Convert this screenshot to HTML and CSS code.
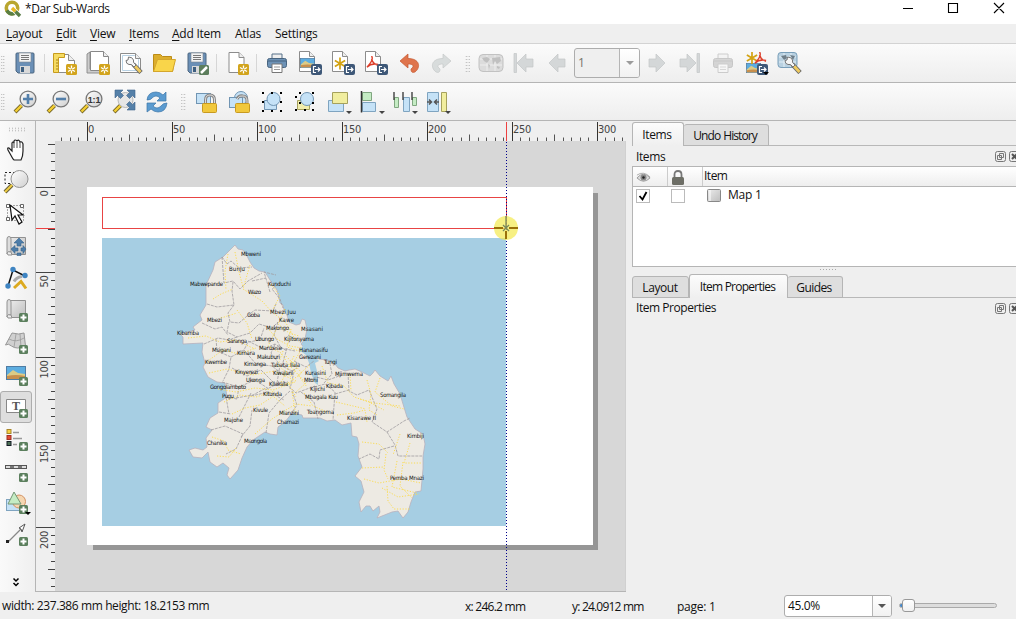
FILE: index.html
```html
<!DOCTYPE html>
<html lang="en">
<head>
<meta charset="utf-8">
<title>*Dar Sub-Wards</title>
<link rel="stylesheet" href="styles.css">
</head>
<body>
<svg class="defs" width="0" height="0">
  <defs>
    <linearGradient id="lens" x1="0" y1="0" x2="1" y2="1"><stop offset="0" stop-color="#fff"/><stop offset="1" stop-color="#cfcfcf"/></linearGradient>
    <linearGradient id="sheet" x1="0" y1="0" x2="1" y2="1"><stop offset="0" stop-color="#ececec"/><stop offset="1" stop-color="#bdbdbd"/></linearGradient>
    <symbol id="plus" viewBox="0 0 9 9"><rect width="9" height="9" rx="1.5" fill="#5b7f5d"/><path d="M4.5 1.5v6M1.5 4.5h6" stroke="#fff" stroke-width="2"/></symbol>
    <symbol id="star" viewBox="0 0 11 11"><rect width="11" height="11" rx="1.5" fill="#d2a41c"/><path d="M5.5 1.5v8M2 3.5l7 4M9 3.5l-7 4" stroke="#fff" stroke-width="1.3"/><circle cx="5.5" cy="5.5" r="1" fill="#d2a41c"/></symbol>
    <symbol id="export" viewBox="0 0 11 11"><rect width="11" height="11" rx="2" fill="#3e5878"/><path d="M5 2.5H2.5v6H5M4 5.500h5M7 3.500l2 2-2 2" fill="none" stroke="#fff" stroke-width="1.200"/></symbol>
    <symbol id="page" viewBox="0 0 16 21"><path d="M.5.5h10l5 5v15H.5z" fill="#fff" stroke="#8c8c8c"/><path d="M10.500.500v5h5" fill="#eee" stroke="#8c8c8c"/></symbol>
    <symbol id="floppy" viewBox="0 0 20 22"><path d="M1 2q0-1 1-1h16q1 0 1 1v18q0 1-1 1H3l-2-2z" fill="#6a8fb6" stroke="#4c6680"/><path d="M4 1h12v9H4z" fill="#f3f3f3" stroke="#7c8790" stroke-width=".6"/><path d="M6 3.500h8M6 5.500h8M6 7.500h8" stroke="#777"/><path d="M5 14h10v7H5z" fill="#d9d9d9"/><path d="M6 15h3v5H6z" fill="#3e5f80"/></symbol>
    <symbol id="mag" viewBox="0 0 24 24"><path d="M8.500 15.500L2 22" stroke="#766727" stroke-width="4"/><path d="M8.500 15.500L2.500 21.500" stroke="#f5cf34" stroke-width="2.400"/><circle cx="15" cy="9" r="7.900" fill="url(#lens)" stroke="#777" stroke-width="1.300"/></symbol>
    <symbol id="wrench" viewBox="0 0 18 18"><path d="M8 8l8 8.500" stroke="#696969" stroke-width="4.600"/><path d="M9.500 9.500l6 6.500" stroke="#efcb5f" stroke-width="2.800"/><path d="M3.500 1l-.5 3-2 .5q0 3.500 3 4l2.500 0 2.500 2.500 2-2-2.500-2.500V4q-1-3-5-3z" fill="#f6f6f6" stroke="#777"/></symbol>
    <symbol id="printer" viewBox="0 0 20 20"><path d="M5 1h10v6H5z" fill="#eee" stroke="#567089"/><rect x=".5" y="5.500" width="19" height="9" rx="2" fill="#6d92b6" stroke="#48647f"/><path d="M1 8h18" stroke="#46637f"/><path d="M5 11h10v8.500H5z" fill="#fff" stroke="#777"/><path d="M7 14h6M7 16.500h6" stroke="#999"/></symbol>
    <symbol id="maproll" viewBox="0 0 21 21"><path d="M3.500 1.500h16v17h-16z" fill="url(#sheet)" stroke="#919191"/><path d="M1 3q0-2.500 2-2.500T5 3v13q-4-1-4 2z" fill="#ddd" stroke="#929292"/><path d="M1 17q1-2 4-1l1 3H2z" fill="#eee" stroke="#919191"/></symbol>
    <symbol id="float" viewBox="0 0 11 11"><rect x=".5" y=".5" width="10" height="10" rx="2" fill="#eee" stroke="#777"/><path d="M4.500 2.500h4v4h-4zM2.500 4.500h4v4h-4z" fill="none" stroke="#777"/></symbol>
    <symbol id="close" viewBox="0 0 11 11"><rect x=".5" y=".5" width="10" height="10" rx="2" fill="#eee" stroke="#777"/><path d="M3 3l5 5M8 3L3 8" stroke="#555" stroke-width="2"/></symbol>
    <symbol id="asterisk" viewBox="0 0 14 14"><path d="M7 0v14M1 3.500l12 7M13 3.500l-12 7" stroke="#d3a313" stroke-width="2"/></symbol>
    <symbol id="acro" viewBox="0 0 14 14"><path d="M6 0c2 3 0 7-5 12M6 3c1 4 3 6 7 7M1 12c3-3 7-4 12-3" fill="none" stroke="#dd3e2a" stroke-width="1.500"/></symbol>
    <symbol id="photo" viewBox="0 0 20 14" preserveAspectRatio="none"><rect x=".5" y=".5" width="19" height="13" fill="#5dade0" stroke="#4f7ca3"/><path d="M1 9l6-5 5 3 7 1v5H1z" fill="#dccb86"/><path d="M1 10q9-2 18 0v3H1z" fill="#c88f4d"/></symbol>
    <pattern id="hticks" x="87" y="121" width="85" height="21" patternUnits="userSpaceOnUse">
      <path d="M.5 1v20" stroke="#333"/><path d="M8.500 16.500v5M17.500 16.500v5M25.500 16.500v5M34.500 16.500v5M42.500 13.500v8M51.500 16.500v5M59.500 16.500v5M68.500 16.500v5M76.500 16.500v5" stroke="#555"/>
    </pattern>
    <pattern id="vticks" x="36" y="187" width="20" height="85" patternUnits="userSpaceOnUse">
      <path d="M0 .5h20" stroke="#444"/><path d="M15 8.500h5M15 17.500h5M15 25.500h5M15 34.500h5M12 42.500h8M15 51.500h5M15 59.500h5M15 68.500h5M15 76.500h5" stroke="#444"/>
    </pattern>
  </defs>
</svg>

<header class="titlebar">
  <svg class="app-logo" viewBox="0 0 17 17"><circle cx="8" cy="8" r="5.700" fill="none" stroke="#b9a62f" stroke-width="3.600"/><path d="M2.700 10.500q4 5.500 9.300 2" fill="none" stroke="#5b7f43" stroke-width="3.600"/><path d="M8 8l7.500 7.500" stroke="#fff" stroke-width="5"/><path d="M8 8l3.500 3.500" stroke="#e9b926" stroke-width="3.400"/><path d="M11.500 11.500l4.500 4.500" stroke="#5a7d47" stroke-width="3.400"/></svg>
  <span class="title">*Dar Sub-Wards</span>
  <svg class="win-controls" viewBox="0 0 113 24"><path d="M0 8.500h10M45.500 3.500h9v9h-9zM91 3l10 10M101 3L91 13" fill="none" stroke="#000" stroke-width="1.100"/></svg>
</header>

<nav class="menubar">
  <span class="m-layout"><u>L</u>ayout</span><span class="m-edit"><u>E</u>dit</span><span class="m-view"><u>V</u>iew</span><span class="m-items"><u>I</u>tems</span><span class="m-add"><u>A</u>dd Item</span><span class="m-atlas">Atlas</span><span>Settings</span>
</nav>

<div class="toolbar">
  <i class="grip first"></i>
  <b class="btn"><svg viewBox="0 0 24 24"><use href="#floppy" x="2" y="1" width="20" height="22"/></svg></b>
  <i class="sep"></i>
  <b class="btn"><svg viewBox="0 0 24 24"><path d="M1.500 3.500h14l6 6v12h-20z" fill="#fff" stroke="#8c8c8c"/><path d="M15.500 3.500v6h6" fill="#eee" stroke="#8c8c8c"/><path d="M.5 2.500h11v4h-6v15h-5z" fill="#f5db62" stroke="#c79b1c"/><path d="M3 9h2M3 12h2M3 15h2M3 18h2" stroke="#a7821f"/><use href="#star" x="13" y="13" width="11" height="11"/></svg></b>
  <b class="btn"><svg viewBox="0 0 24 24"><path d="M1 3l3-2v17l14 2-2 2H1z" fill="#ccc" stroke="#888" stroke-width=".9"/><path d="M4.500.500h13l5 5v14h-18z" fill="#fff" stroke="#888"/><path d="M17.500.500v5h5" fill="#eee" stroke="#888"/><use href="#star" x="13" y="13" width="11" height="11"/></svg></b>
  <b class="btn"><svg viewBox="0 0 24 24"><path d="M1.500 2.500h15l5 5v14h-20z" fill="#fff" stroke="#8c8c8c"/><path d="M3.500 4.500h12l4 4v11h-16z" fill="none" stroke="#b9d2e4"/><path d="M16.500 2.500v5h5" fill="#eee" stroke="#8c8c8c"/><use href="#wrench" x="6" y="5" width="18" height="18"/></svg></b>
  <b class="btn"><svg viewBox="0 0 24 24"><path d="M1.500 20.500v-17h7l2 2h9v3h3l-2 12z" fill="#dcae2d" stroke="#bc8c17"/><path d="M5.500 8.500h18l-3 12h-19z" fill="#f9d54a" stroke="#d4a62c"/></svg></b>
  <b class="btn"><svg viewBox="0 0 24 24"><use href="#floppy" x="2" y="1" width="20" height="22"/><rect x="14" y="14" width="10" height="10" rx="1.500" fill="#5c7d5c"/><path d="M16 22l6-6" stroke="#fff" stroke-width="2.500"/></svg></b>
  <i class="sep"></i>
  <b class="btn"><svg viewBox="0 0 24 24"><use href="#page" x="3" y="1" width="17" height="21"/><use href="#star" x="13" y="13" width="11" height="11"/></svg></b>
  <i class="sep"></i>
  <b class="btn"><svg viewBox="0 0 24 24"><use href="#printer" x="2" y="2" width="20" height="20"/></svg></b>
  <b class="btn"><svg viewBox="0 0 24 24"><use href="#page" x="1" y="0" width="16" height="21"/><use href="#photo" x="2" y="7" width="15" height="10"/><use href="#export" x="13" y="13" width="11" height="11"/></svg></b>
  <b class="btn"><svg viewBox="0 0 24 24"><use href="#page" x="1" y="0" width="16" height="21"/><use href="#asterisk" x="3" y="6" width="12" height="13"/><use href="#export" x="13" y="13" width="11" height="11"/></svg></b>
  <b class="btn"><svg viewBox="0 0 24 24"><use href="#page" x="1" y="0" width="16" height="21"/><use href="#acro" x="2" y="5" width="13" height="13"/><use href="#export" x="13" y="13" width="11" height="11"/></svg></b>
  <b class="btn"><svg viewBox="0 0 24 24"><path d="M3 10l8-7v4.500c12 0 13 9 7 13.500-3 1-4 0-4-3 4-3 2-5-3-5v4z" fill="#df744c" stroke="#c4572f" stroke-width=".7"/></svg></b>
  <b class="btn"><svg viewBox="0 0 24 24"><path d="M21 10l-8-7v4.500C1 7.500 0 16.500 6 21c3 1 4 0 4-3-4-3-2-5 3-5v4z" fill="#d8dcdc" stroke="#c5c9c9" stroke-width=".7"/></svg></b>
  <i class="grip"></i>
  <b class="btn"><svg viewBox="0 0 24 24"><rect x="0" y="3.500" width="24" height="17" rx="4" fill="#dcdcdc" stroke="#c2c2c2"/><path d="M1 8h22M1 14h22M8 4v16M16 4v16" stroke="#eee"/><path d="M3 7l5-1 3 2-3 4-3-2zM9 13l2 1-1 4zM13 7l8-1 1 4-4 3-2-3-2 4zM18 15l3 1-1 2-2-1z" fill="#c0c0c0"/></svg></b>
  <b class="btn"><svg viewBox="0 0 24 24" class="dim"><path d="M2 2.500h2.500v19H2zM5 12l9-9v5h7v8h-7v5z"/></svg></b>
  <b class="btn"><svg viewBox="0 0 24 24" class="dim"><path d="M4 12l9-9v5h7v8h-7v5z"/></svg></b>
  <div class="combo page-combo"><span>1</span><em></em></div>
  <b class="btn"><svg viewBox="0 0 24 24" class="dim"><path d="M20 12l-9-9v5H4v8h7v5z"/></svg></b>
  <b class="btn"><svg viewBox="0 0 24 24" class="dim"><path d="M19 2.500h2.500v19H19zM18 12L9 3v5H2v8h7v5z"/></svg></b>
  <b class="btn"><svg viewBox="0 0 24 24" class="faded"><use href="#printer" x="2" y="2" width="20" height="20"/></svg></b>
  <b class="btn"><svg viewBox="0 0 24 24"><use href="#photo" x="2" y="12" width="15" height="10"/><use href="#asterisk" x="2" y="1" width="12" height="12"/><use href="#acro" x="10" y="1" width="13" height="13"/><use href="#export" x="13" y="13" width="11" height="11"/><path d="M19 21h6l-3 3z"/></svg></b>
  <b class="btn"><svg viewBox="0 0 24 24"><rect x="1" y="1.500" width="19" height="15" rx="3" fill="#b9d1e1" stroke="#789eb9"/><path d="M2 6h17M2 11h17M7 2v14M14 2v14" stroke="#e2eef5"/><path d="M4 5l5-1 1 3-3 2zM13 4l5 1-2 4z" fill="#6e7e89"/><use href="#wrench" x="7" y="5" width="18" height="18"/></svg></b>
</div>

<div class="toolbar">
  <i class="grip first"></i>
  <b class="btn"><svg viewBox="0 0 24 24"><use href="#mag"/><path d="M15 4v10M10 9h10" stroke="#537faa" stroke-width="2.600"/></svg></b>
  <b class="btn"><svg viewBox="0 0 24 24"><use href="#mag"/><path d="M10 9h10" stroke="#537faa" stroke-width="2.600"/></svg></b>
  <b class="btn"><svg viewBox="0 0 24 24"><use href="#mag"/><text x="15" y="12.500" class="ratio">1:1</text></svg></b>
  <b class="btn"><svg viewBox="0 0 24 24"><path d="M8.500 15.500L2 22" stroke="#766727" stroke-width="4"/><path d="M8.500 15.500L2.500 21.500" stroke="#f5cf34" stroke-width="2.400"/><circle cx="13.500" cy="10" r="7.500" fill="#e6e6e6" stroke="#aaa" stroke-width=".8"/><path d="M3 0h8L8.500 2.500l3 3-3 3-3-3L3 8zM23 0h-8l2.500 2.500-3 3 3 3 3-3L23 8zM23 20h-8l2.500-2.500-3-3 3-3 3 3L23 12z" fill="#5580a8" stroke="#3d6289" stroke-width=".6"/></svg></b>
  <b class="btn"><svg viewBox="0 0 24 24"><path d="M2 10q1-8 9-8 4 0 7 3l3-3v9h-9l3-3q-4-4-8 0-1 2-5 2z" fill="#5b9bd0" stroke="#3c75a8" stroke-width=".7"/><path d="M22 13q-1 9-9 9-4 0-7-3l-4 3v-9h9l-3 3q4 4 8 0 2-3 6-3z" fill="#5b9bd0" stroke="#3c75a8" stroke-width=".7"/></svg></b>
  <i class="grip wide"></i>
  <b class="btn"><svg viewBox="0 0 24 24"><rect x="1.500" y="3.500" width="14" height="10" fill="#c5e2f7" stroke="#7195b3"/><path d="M10.500 14v-4q0-5 4.500-5t4.500 5v4" fill="none" stroke="#888" stroke-width="3"/><path d="M10.500 14v-4q0-5 4.500-5t4.500 5v4" fill="none" stroke="#ddd"/><rect x="7.500" y="13.500" width="14" height="9" rx="1" fill="#f1c83c" stroke="#c89a20"/></svg></b>
  <b class="btn"><svg viewBox="0 0 24 24"><circle cx="13" cy="8" r="6.500" fill="#c5e2f7" stroke="#7195b3"/><rect x="1.500" y="7.500" width="13" height="10" fill="#c5e2f7" stroke="#7195b3"/><path d="M9 9q2-4 6-3 4 0 4 5v3" fill="none" stroke="#888" stroke-width="3"/><path d="M9 9q2-4 6-3 4 0 4 5v3" fill="none" stroke="#ddd"/><rect x="7.500" y="13.500" width="14" height="9" rx="1" fill="#f1c83c" stroke="#c89a20"/></svg></b>
  <b class="btn"><svg viewBox="0 0 24 24"><path d="M3.500 10.500h12v9h-12z" fill="#c5e2f7" stroke="#7195b3"/><circle cx="12.500" cy="9" r="6.500" fill="#c5e2f7" stroke="#7195b3"/><path d="M1 2h2v2H1zM10 2h2v2h-2zM19 2h2v2h-2zM1 11h2v2H1zM19 11h2v2h-2zM1 20h2v2H1zM10 20h2v2h-2zM19 20h2v2h-2z"/></svg></b>
  <b class="btn"><svg viewBox="0 0 24 24"><path d="M3.500 10.500h12v9h-12z" fill="#f1edac" stroke="#a5a15c"/><circle cx="13" cy="9" r="6.500" fill="#c5e2f7" stroke="#7195b3"/><path d="M5 2h2v2H5zM18 2h2v2h-2zM1 6h2v2H1zM5 12h2v2H5zM18 12h2v2h-2zM1 19h2v2H1zM10 19h2v2h-2zM18 19h2v2h-2z"/></svg></b>
  <b class="btn"><svg viewBox="0 0 24 24"><path d="M1.500 10.500h15v11h-15z" fill="#c5e2f7" stroke="#7fa4c0"/><path d="M5.500 2.500h15v11h-15z" fill="#f1ee9f" stroke="#a5a15c"/><path class="drop" d="M19 21h6l-3 3z"/></svg></b>
  <b class="btn"><svg viewBox="0 0 24 24"><path d="M2.500 2.500h9v8h-9z" fill="#c5ecc4" stroke="#80a680"/><path d="M2.500 12.500h13v9h-13z" fill="#c5e2f7" stroke="#7fa4c0"/><path d="M1.500 1v21.500" stroke="#333" stroke-width="1.500"/><path class="drop" d="M19 21h6l-3 3z"/></svg></b>
  <b class="btn"><svg viewBox="0 0 24 24"><path d="M1.500 7.500h4v10h-4zM19.500 7.500h4v8h-4z" fill="#c5ecc4" stroke="#80a680"/><path d="M10.500 7.500h6v14h-6z" fill="#c5e2f7" stroke="#7fa4c0"/><path d="M1 2v8M10 2v8M19 2v8" stroke="#333" stroke-width="1.300"/><path class="drop" d="M19 21h6l-3 3z"/></svg></b>
  <b class="btn"><svg viewBox="0 0 24 24"><path d="M1.500 2.500h11v19h-11z" fill="#c5e2f7" stroke="#7fa4c0"/><path d="M15.500 2.500h5v19h-5z" fill="#f1ee9f" stroke="#a5a15c"/><path d="M1 12h4M3 9.500l2.500 2.500L3 14.500M13 12H9M11 9.500L8.500 12l2.500 2.500" fill="none" stroke="#555" stroke-width="1.500"/><path class="drop" d="M19 21h6l-3 3z"/></svg></b>
</div>

<main class="workspace">
  <aside class="toolbox">
    <i class="hgrip"></i>
    <b><svg viewBox="0 0 24 24"><path d="M9 22L4 13q-1-3 1-2l3 3V6q1-2 2 0V4q1-2 3 0V4q2-2 3 1 2-1 3 2v7q0 5-2 9H10z" fill="#fff" stroke="#222" stroke-width="1.200"/><path d="M10 6v5M13 5v6M16 5v6" stroke="#222" stroke-width=".8"/></svg></b>
    <b><svg viewBox="0 0 24 24"><path d="M1 3.500h15v11H1z" fill="none" stroke="#222" stroke-dasharray="2"/><path d="M8 16l-7 7" stroke="#696139" stroke-width="4"/><path d="M8 16l-7 7" stroke="#efcd42" stroke-width="2"/><circle cx="15.500" cy="10" r="8.500" fill="url(#lens)" stroke="#929292"/></svg></b>
    <b><svg viewBox="0 0 24 24"><rect x="3.500" y="4.500" width="16" height="15" fill="none" stroke="#555" stroke-dasharray="1 2"/><path d="M2.500 3.500h3v3h-3zM16.500 3.500h3v3h-3zM2.500 16.500h3v3h-3z" fill="#fff" stroke="#666"/><path d="M6 4l2 15 3-4 4 8 3-2-4-7h5z" fill="#fff" stroke="#111" stroke-width="1.200"/></svg></b>
    <b><svg viewBox="0 0 24 24"><use href="#maproll" x="2" y="2" width="21" height="21"/><path d="M15 4l5 5h-3v3h-4V9h-3zM7 15l4-3.500V14h3v3h-3v2.500zM22 15l-3-3.500V14h-2v3h2v2.500zM13 19h4v2.500h-4z" fill="#4d7da9" stroke="#36658f" stroke-width=".6"/></svg></b>
    <b><svg viewBox="0 0 24 24"><path d="M4 20L9 4l12 6" fill="none" stroke="#111" stroke-width="1.500"/><circle cx="9" cy="3.500" r="2.700" fill="#3e84c2"/><circle cx="21" cy="9.500" r="2.700" fill="#3e84c2"/><circle cx="4" cy="20" r="2.700" fill="#3e84c2"/><path d="M10 15.500q2-4 8-5" stroke="#aaa" fill="none" stroke-width="3"/><path d="M10 22l7-6.500 5 7" fill="none" stroke="#dcaa20" stroke-width="3"/></svg></b>
    <b><svg viewBox="0 0 24 24"><use href="#maproll" x="2" y="1" width="21" height="21"/><use href="#plus" x="15" y="15" width="9" height="9"/></svg></b>
    <b><svg viewBox="0 0 24 24"><path d="M1.500 15L8 3q7 2 12 0l1.500 13q-9 4-14 0-3-3-6-1z" fill="#d0d0d0" stroke="#979797"/><path d="M5 9q7 4 15-1M12 4l-2 13M16 4l1 13" fill="none" stroke="#999" stroke-width=".8"/><use href="#plus" x="15" y="15" width="9" height="9"/></svg></b>
    <b><svg viewBox="0 0 24 24"><use href="#photo" x="2" y="4" width="20" height="14"/><use href="#plus" x="15" y="15" width="9" height="9"/></svg></b>
    <b class="active"><svg viewBox="0 0 24 24"><path d="M2.500 4.500h19v13h-19z" fill="#fff" stroke="#888"/><text x="12" y="15" class="label-t">T</text><use href="#plus" x="15" y="14" width="9" height="9"/></svg></b>
    <b><svg viewBox="0 0 24 24"><rect x="3" y="2.500" width="4" height="4" fill="#f4d141" stroke="#a9862a"/><rect x="3" y="8.500" width="4" height="4" fill="#e34b36" stroke="#9f3224"/><rect x="3" y="14.500" width="4" height="4" fill="#4c7155" stroke="#151c26"/><path d="M9 5.500h6M9 11.500h9M9 17.500h4" stroke="#999" stroke-width="1.500"/><use href="#plus" x="15" y="15" width="9" height="9"/></svg></b>
    <b><svg viewBox="0 0 24 24"><rect x="1.500" y="6.500" width="21" height="3" fill="#ddd" stroke="#555"/><path d="M6 8h4M14 8h4" stroke="#777" stroke-width="2"/><use href="#plus" x="15" y="14" width="9" height="9"/></svg></b>
    <b><svg viewBox="0 0 24 24"><rect x="2.500" y="8.500" width="14" height="11" fill="#c5e2f7" stroke="#7fa4c0"/><circle cx="15" cy="10.500" r="6.500" fill="#f5d7b1" stroke="#d49263"/><path d="M10 1l7 12H4z" fill="#c5ecc4" stroke="#759776"/><use href="#plus" x="15" y="14" width="9" height="9"/><path d="M21 21h6l-3 3z"/></svg></b>
    <b><svg viewBox="0 0 24 24"><path d="M4 19L18 5" stroke="#888" stroke-width="1.300"/><path d="M21 1l-6 4 2 1 1 3z" fill="#fff" stroke="#555"/><rect x="2" y="17" width="3" height="3" fill="#222"/><use href="#plus" x="15" y="14" width="9" height="9"/></svg></b>
    <svg class="more" viewBox="0 0 6 9"><path d="M.5.500L3 3 5.500.500M.5 5L3 7.500 5.500 5" fill="none" stroke="#000" stroke-width="1.500"/></svg>
  </aside>

  <svg class="canvas" viewBox="36 121 596 471" width="596" height="471">
    <rect x="55" y="141" width="571" height="450" fill="#d7d7d7"/>
    <path d="M36 591.500h590" stroke="#b5b5b5"/>
    <path d="M625.500 141v450" stroke="#d0d0d0"/>
    <rect x="61" y="121" width="564" height="20" fill="url(#hticks)"/>
    <rect x="36" y="142" width="19" height="448" fill="url(#vticks)"/>
    <g class="ruler-text">
      <text x="88" y="133">0</text><text x="173" y="133">50</text><text x="258" y="133">100</text><text x="343" y="133">150</text><text x="428" y="133">200</text><text x="513" y="133">250</text><text x="598" y="133">300</text>
      <text transform="translate(47.500 196.500) rotate(-90)">0</text><text transform="translate(47.500 287.500) rotate(-90)">50</text><text transform="translate(47.500 378.500) rotate(-90)">100</text><text transform="translate(47.500 463) rotate(-90)">150</text><text transform="translate(47.500 549) rotate(-90)">200</text>
    </g>
    <path d="M36 228.500h19M506.500 122v19" stroke="#ee4040"/>
    <path d="M93 545h500V193h5v357H93z" fill="#969696"/>
    <rect x="87" y="187" width="506" height="358" fill="#fff"/>
    <rect x="102" y="238" width="404" height="288" fill="#a6cee3"/>
    <path class="land" d="M235 245l3 4 5 1 4 6 3 6 4 6 5 3 6 1 5 8 7 10 2 8 1 5 3 2 1 5 3 5 2 7 7 3 4-1 2-5 3 1 2 9-2 10-4 5 6 7 5 5 7 3 8 1 8 4 3 4 7 3 4-1 6-1 7 3 8 4 3-3 2-3 5 6 8 5 3-5 3 8 6 10 3 10 4 13 8 12 8 5 2 10-2 12v13l-2 22-6 1-4 10-3 10-5 6-5-7-6 1-15 6 3-6-1-6-6 5-3-5h-4l-5 6-2-10 5-10-3-11-6-5 7-9-4-11 1-12-2-7-5-1-1-13-9 2-7-5-8 1-7-3h-17l-1-3-10-2-7 9-7 5-1 8-7-1-5-2-12 8-6 7-5 11-4 12-8 9-3-4 2-7-6-5-6 4-7-5-2-10-6 6-9-1-4-7 6-2 8 2 4-3-1-9 6-8-6-3 4-9 8-5v-10l9-6-2-14-8-1-9-5-5-10 2-4-3-11 1-9-20 1v-7l-3-3 15-4-2-3 9-7-2-5 6-10v-20l7-15 2-8 8-5z"/>
    <path d="M304 345l-5 5 7 5 3 8 2 10 4 10 3 2v-10l-3-12 4-2z" fill="#a6cee3"/>
    <g class="bounds">
      <path d="M222 257l5 7 4-3 8 7 13-1M222 257l2 26 9-2 7 8 8-8 14-8M207 304l10 3 17-2-2-14 1-9M234 305l-6 8 2 9 9 1 8-7 8-6 18 1 3-7M229 322l-2 10 10 5 13-4 9-9 13 4 6-6M202 323l13 6 7-2 6 8M204 344l14-6 11 2 8-3M216 339l1 12 14 6-2 12-6 12M231 357l13-7 4-8 12-2 4-12M248 341l16 8 11-5 12 7M244 350l12 14 16 2 13 10 12-8M232 368l15 8 14-6 14 14 13-2M222 382l17 5 16-7 14 9M239 387l-2 12-11-2 3 17M236 398l17-3 13-7M239 417l12-24M251 396l18-4 15 8M219 412l12 2M211 430l14-4 18 8-7 15-10 5M241 437l9-11 2-16M266 433l3-20 11-13 10-9M265 390l18-9 13 12 19-7M288 335l10 6 8-3M278 322l-4 13 7 13 14 3M281 282l-9 7 8 10 3 9M252 281l14-3M270 292l-6-20 12 3M275 344l-4 9 9 12-3 18M287 348l-5 18 12 6-4 17M292 391l5 14-7 10M301 392l13 10 4 17"/>
      <path d="M348 373l1 18 8 4 12-5 8 19-5 13 15 10 17-11 6-3M387 432l8 13 3 11h24M394 446l-14 4-1 9-9-5-11 5M314 387l11-3 10 8-2 28M324 383l8-9-2-10M294 361l12 6 8-6M306 382l10-5 12 3 14-5M335 394l14-4"/>
    </g>
    <path class="roads" d="M228 254l-3 17 1 19M235 252l4 20 4 15M250 265l-7 24 19 12 9 10 15 12 10 18M213 299l8-5 12-5M237 310l10 13 5 16M221 318l16-5M271 284l9 12-7 13M285 309l-7 15 11 9 10 3M188 338l18-2 14 6 15-2 20 9M205 363l18-13 16 4 17-6M209 373l18-4 25 6 23-4 21 10M218 389l18 3 19-4 18 2 22-8M224 402l16-7 16 2 19-6M232 414l13-6 15-3 18-12M212 437l12 4 4 9 13 4M217 456l12 1 7-9M255 434l17-15 14-9 10-6 16 2M266 326l11 13 13 7 12 2M277 328l-9 18 13 7 9 14M291 329l-4 18 12 4M283 351l-5 14 13 12 7-12M286 356l16 17-14 10 8 14M294 356l-14 29 15-3M301 350l-10 17 15 16-10 9M310 365l-12 10 9 12M322 366l6 17 16 3 10 11 15 5 15 8M350 374l1 17M367 380l4 14-2 16 8 5M380 378l-5 14 17 14 12 3M360 399l14 4 26 3M336 402l30 7M337 415l17-2 11-3 2 12M362 442l17 2 9 9M386 454l-2 16 4 9M362 468l22-1M364 479l15 4 22-4 20 4M387 486l1 15 6 8h17M403 462l-3 24 12 12M397 461l-5 26 25 6M400 434l-7 21M410 443l-6 20h18M382 488l16 9 21-3M274 397l11 9M292 392l4 24M304 393l9 13 14 6"/>
    <g class="places">
      <text x="241" y="256" textLength="20">Mbweni</text><text x="229" y="271" textLength="16">Bunju</text><text x="190" y="286" textLength="33">Mabwepande</text><text x="268" y="286" textLength="23">Kunduchi</text><text x="248" y="294" textLength="13">Wazo</text><text x="270" y="314" textLength="26">Mbezi Juu</text><text x="279" y="322" textLength="15">Kawe</text><text x="247" y="317" textLength="13">Goba</text><text x="207" y="322" textLength="15">Mbezi</text><text x="266" y="330" textLength="23">Makongo</text><text x="301" y="331" textLength="22">Msasani</text><text x="177" y="335" textLength="22">Kibamba</text><text x="227" y="343" textLength="20">Saranga</text><text x="255" y="341" textLength="19">Ubungo</text><text x="284" y="341" textLength="30">Kijitonyama</text><text x="259" y="350" textLength="23">Manzese</text><text x="299" y="352" textLength="29">Hananasifu</text><text x="212" y="352" textLength="19">Msigani</text><text x="237" y="355" textLength="18">Kimara</text><text x="257" y="359" textLength="23">Makuburi</text><text x="299" y="359" textLength="22">Gerezani</text><text x="205" y="364" textLength="22">Kwembe</text><text x="244" y="366" textLength="22">Kimanga</text><text x="271" y="367" textLength="17">Tabata</text><text x="290" y="367" textLength="10">Ilala</text><text x="324" y="364" textLength="13">Tungi</text><text x="235" y="374" textLength="23">Kinyerezi</text><text x="273" y="375" textLength="20">Kiwalani</text><text x="305" y="375" textLength="21">Kurasini</text><text x="335" y="376" textLength="28">Mjimwema</text><text x="246" y="382" textLength="19">Ukonga</text><text x="269" y="386" textLength="19">Kilakala</text><text x="304" y="382" textLength="14">Mtoni</text><text x="210" y="389" textLength="36">Gongolamboto</text><text x="310" y="391" textLength="15">Kijichi</text><text x="326" y="388" textLength="17">Kibada</text><text x="222" y="398" textLength="12">Pugu</text><text x="263" y="396" textLength="19">Kitunda</text><text x="305" y="399" textLength="33">Mbagala Kuu</text><text x="380" y="397" textLength="26">Somangila</text><text x="253" y="412" textLength="15">Kivule</text><text x="279" y="415" textLength="20">Mianzini</text><text x="307" y="414" textLength="27">Toangoma</text><text x="347" y="420" textLength="29">Kisarawe II</text><text x="224" y="422" textLength="19">Majohe</text><text x="277" y="424" textLength="22">Chamazi</text><text x="407" y="438" textLength="17">Kimbiji</text><text x="207" y="445" textLength="20">Chanika</text><text x="244" y="443" textLength="23">Msongola</text><text x="390" y="480" textLength="34">Pemba Mnazi</text>
    </g>
    <rect x="102.500" y="197.500" width="404" height="31" fill="none" stroke="#e84444"/>
    <path d="M506.500 142v449" stroke="#00008b" stroke-dasharray="1 2"/>
    <circle cx="506" cy="228" r="12" fill="#f3e94f" fill-opacity=".7"/>
    <path d="M509 228h9M506 231v8M494 228h9" stroke="#9a7109" stroke-width="2"/><path d="M506 216v11M503 225l6 6M509 225l-6 6" stroke="#79895c" stroke-width="1.300"/>
  </svg>

  <section class="docks">
    <div class="tabs"><span class="tab on t-items">Items</span><span class="tab t-undo">Undo History</span></div>
    <div class="dock-title"><span>Items</span><svg viewBox="0 0 24 11"><use href="#float" width="11" height="11"/><use href="#close" x="14" width="11" height="11"/></svg></div>
    <div class="tree">
      <div class="tree-head">
        <span class="col"><svg class="eye" viewBox="0 0 16 12"><path d="M1 7q7-8 14 0-7 7-14 0z" fill="#ddd" stroke="#999"/><path d="M1 4q7-5 14 2" fill="none" stroke="#aaa"/><circle cx="8" cy="6.500" r="3.200" fill="#888"/><circle cx="8" cy="6.500" r="1.300" fill="#222"/></svg></span>
        <span class="col"><svg class="lock" viewBox="0 0 12 15"><path d="M2.500 8V4.500Q2.500 1 6 1t3.500 3.500V8" fill="none" stroke="#777" stroke-width="1.800"/><rect y="7" width="12" height="8" rx="1.500" fill="#6d6e66"/></svg></span>
        <span class="name">Item</span>
      </div>
      <div class="tree-row">
        <span class="check"><svg viewBox="0 0 12 12"><path d="M2.500 6l3 3.500L9.500 2" fill="none" stroke="#000" stroke-width="1.800"/></svg></span>
        <span class="check"></span>
        <svg class="map-icon" viewBox="0 0 14 13"><rect x=".5" y=".5" width="13" height="12" rx="1" fill="url(#sheet)" stroke="#888"/><path d="M3 1v11" stroke="#fff"/></svg>
        <span class="row-name">Map 1</span>
      </div>
    </div>
    <div class="splitter"><i></i></div>
    <div class="tabs lower"><span class="tab t-layout">Layout</span><span class="tab on t-props">Item Properties</span><span class="tab t-guides">Guides</span></div>
    <div class="dock-title"><span>Item Properties</span><svg viewBox="0 0 24 11"><use href="#float" width="11" height="11"/><use href="#close" x="14" width="11" height="11"/></svg></div>
  </section>
</main>

<footer class="status">
  <span class="size">width: 237.386 mm height: 18.2153 mm</span>
  <span class="pos-x">x: 246.2 mm</span>
  <span class="pos-y">y: 24.0912 mm</span>
  <span class="pg">page: 1</span>
  <div class="combo zoom"><span>45.0%</span><em></em></div>
  <div class="slider"><i></i></div>
</footer>
</body>
</html>
```
FILE: styles.css
```css
* { box-sizing: border-box; }
body {
  margin: 0;
  width: 1016px;
  height: 619px;
  display: flex;
  flex-direction: column;
  overflow: hidden;
  background: #efefef;
  color: #111;
  font: 12px/16px "Open Sans", "Noto Sans", sans-serif;
  letter-spacing: -0.25px;
}
svg { display: block; overflow: visible; flex: none; }
.defs { height: 0; }

.titlebar {
  flex: 0 0 24px;
  display: flex;
  background: #fff;
  padding-left: 4px;
}
.app-logo { width: 17px; height: 17px; margin-right: 4px; }
.title { margin-top: 1px; letter-spacing: -0.45px; }
.win-controls { width: 113px; height: 24px; margin-left: auto; }

.menubar {
  flex: 0 0 20px;
  display: flex;
  padding: 2px 0 0 6px;
  border-bottom: 1px solid #d3d3d3;
  white-space: nowrap;
}
.menubar u { text-underline-offset: 2px; }
.m-layout { width: 50px; }
.m-edit { width: 34px; }
.m-view { width: 39px; }
.m-items { width: 43px; }
.m-add { width: 63px; }
.m-atlas { width: 40px; }

.toolbar {
  flex: 0 0 39px;
  display: flex;
  align-items: center;
  border-bottom: 1px solid #b5b5b5;
  background: linear-gradient(#fbfbfb, #eee);
}
.toolbar + .toolbar { flex-basis: 38px; }
.btn { flex: 0 0 33px; display: flex; justify-content: center; }
.btn svg { width: 24px; height: 24px; }
.sep { flex: 0 0 7px; height: 18px; background: linear-gradient(#d6d6d6, #d6d6d6) 3px 0 / 1px 100% no-repeat; }
.grip {
  flex: 0 0 16px;
  height: 17px;
  background: radial-gradient(circle, #b5b5b5 0.6px, transparent 0.9px) 0 0 / 2.5px 3px;
  background-clip: content-box;
  padding: 0 4px 0 7px;
}
.grip.wide { flex-basis: 17px; padding: 0 4px 0 8px; }
.grip.first { flex-basis: 8px; padding: 0 3px 0 1px; }
.dim { fill: #d4d7d8; stroke: #c3c6c7; stroke-width: 0.7px; }
.faded { opacity: 0.3; filter: grayscale(1); }
.drop { fill: #444; }
.ratio { font: bold 9px "Liberation Sans", sans-serif; letter-spacing: -0.2px; text-anchor: middle; fill: #333; }

.combo {
  display: flex;
  border: 1px solid #adadad;
  border-radius: 3px;
  background: #fff;
  overflow: hidden;
}
.combo span { flex: 1; padding-left: 3px; display: flex; align-items: center; }
.combo em { width: 19px; border-left: 1px solid #b5b5b5; background: linear-gradient(#fff, #f1f1f1); display: grid; place-items: center; }
.combo em::after { content: ""; border: 4px solid transparent; border-top-color: #555; border-bottom: 0; }
.page-combo { width: 66px; height: 30px; margin-left: 1px; background: #efefef; color: #77756b; }
.page-combo em { width: 20px; }
.page-combo em::after { border-top-color: #9b9b9b; }

.workspace { flex: 0 0 471px; display: flex; }
.toolbox {
  width: 36px;
  display: flex;
  flex-direction: column;
  padding-top: 12px;
  border-right: 1px solid #b5b5b5;
  background: linear-gradient(90deg, #fafafa, #efefef);
}
.toolbox b {
  flex: 0 0 32.2px;
  width: 32px;
  display: grid;
  place-items: center;
}
.toolbox b svg { width: 24px; height: 24px; }
.toolbox .active { border: 1px solid #adadad; border-radius: 3px; background: #dedede; }
.hgrip {
  height: 5px;
  width: 17px;
  margin: -6px 0 1px 8px;
  background: radial-gradient(circle, #b5b5b5 0.6px, transparent 0.9px) 0 0 / 3px 2.5px;
}
.more { width: 6px; height: 9px; margin: 27px 0 0 13px; }
.label-t { font: bold 12px "Liberation Serif", serif; text-anchor: middle; fill: #555; letter-spacing: 0; }

.ruler-text { font: 11px "DejaVu Sans Condensed", "DejaVu Sans", sans-serif; font-stretch: condensed; letter-spacing: -0.3px; fill: #444; }
.land { fill: #edeae3; stroke: #b7b1bc; stroke-width: 0.8px; }
.bounds { fill: none; stroke: #a09ca0; stroke-width: 0.8px; stroke-dasharray: 3 1; }
.roads { fill: none; stroke: #fbdc55; stroke-width: 1px; stroke-dasharray: 1.2 1.6; }
.places { font: 6px "DejaVu Sans Condensed", "DejaVu Sans", sans-serif; letter-spacing: 0; fill: #111; }

.docks { flex: 1; min-width: 0; padding-top: 1px; }
.tabs {
  display: flex;
  align-items: flex-end;
  height: 24px;
  background: linear-gradient(#b8b8b8, #b8b8b8) 0 100% / 100% 1px no-repeat;
}
.tab {
  height: 22px;
  border: 1px solid #b5b5b5;
  border-left-width: 0;
  border-radius: 3px 3px 0 0;
  background: #dedede;
  text-align: center;
  padding-top: 3px;
  white-space: nowrap;
}
.tab:first-child { border-left-width: 1px; }
.tab.on { height: 24px; padding-top: 4px; background: linear-gradient(#fcfcfc, #efefef); border-bottom: 0; }
.tab.t-items { width: 52px; padding-right: 2px; letter-spacing: -0.35px; }
.t-undo { width: 85px; letter-spacing: -0.95px; word-spacing: 1px; padding-right: 2px; }
.t-layout { width: 57px; padding-right: 1px; letter-spacing: -0.4px; }
.t-props { width: 99px; border-left-width: 1px; padding-right: 2px; letter-spacing: -0.75px; }
.t-guides { width: 55px; padding-right: 2px; letter-spacing: -0.6px; }
.dock-title { height: 20px; display: flex; padding: 3px 0 0 4px; letter-spacing: -0.4px; }
.dock-title svg { width: 24px; height: 11px; margin: 2px -3px 0 auto; }
.tree { height: 101px; border: 1px solid #b5b5b5; border-right: 0; background: #fff; }
.tree-head { height: 20px; display: flex; border-bottom: 1px solid #b5b5b5; background: linear-gradient(#fff, #eee); }
.col { width: 35px; border-right: 1px solid #ccc; padding: 4px 0 0 3px; }
.col + .col { padding-left: 4px; padding-top: 3px; }
.eye { width: 15px; height: 12px; }
.lock { width: 12px; height: 15px; }
.name { padding: 1px 0 0 1px; letter-spacing: -0.5px; }
.tree-row { display: flex; padding: 2px 0 0 3px; }
.check { width: 14px; height: 14px; margin-right: 21px; border: 1px solid #bbb; background: #fff; }
.check svg { width: 12px; height: 12px; }
.map-icon { width: 14px; height: 13px; margin: 0 7px 0 1px; }
.row-name { margin-top: -2px; }
.splitter { height: 6px; display: flex; justify-content: center; }
.splitter i { width: 17px; height: 3px; margin: 1px 0 0 7px; background: radial-gradient(circle, #aaa 0.6px, transparent 0.9px) 0 0 / 3px 3px; }
.lower { height: 25px; }
.lower .tab.on { padding-top: 4px; }
.lower + .dock-title { padding-top: 2px; letter-spacing: -0.45px; }
.lower + .dock-title svg { margin-top: 3px; }

.status { flex: 1; display: flex; white-space: nowrap; }
.status > span { margin-top: 7px; }
.status > .size { width: 465px; padding-left: 2px; margin-top: 6px; letter-spacing: -0.4px; }
.pos-x { width: 107px; letter-spacing: -0.75px; }
.pos-y { width: 105px; letter-spacing: -0.8px; }
.pg { width: 107px; }
.zoom { width: 108px; height: 22px; margin-top: 3px; }
.zoom span { letter-spacing: -0.4px; }
.slider {
  width: 98px;
  height: 5px;
  margin: 11px 0 0 7px;
  border: 1px solid #aaa;
  border-radius: 3px;
  background: linear-gradient(90deg, #4589cb 4px, #ddd 4px);
}
.slider i {
  display: block;
  width: 13px;
  height: 13px;
  margin: -5px 0 0 2px;
  border: 1px solid #999;
  border-radius: 3px;
  background: linear-gradient(#fff, #f1f1f1);
}
```
